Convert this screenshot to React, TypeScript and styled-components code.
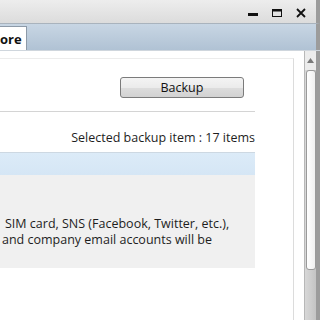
import styled, { createGlobalStyle } from 'styled-components'

const Global = createGlobalStyle`
  html, body {
    margin: 0;
    padding: 0;
    background: #fff;
  }
  body {
    font-family: "Open Sans", "Noto Sans", sans-serif;
    font-size: 12.5px;
    color: #1e1e1e;
  }
`

const Window = styled.div`
  width: 320px;
  height: 320px;
  display: flex;
  flex-direction: column;
  overflow: hidden;
`

const TitleBar = styled.div`
  height: 24px;
  flex-shrink: 0;
  display: flex;
  align-items: center;
  justify-content: flex-end;
  gap: 10px;
  padding: 2px 8px 0 0;
  box-sizing: border-box;
  background: linear-gradient(#ededed, #dcdcdc);
  border-bottom: 1px solid #a9b3bd;
  border-right: 4px solid #9c9c9c;
`

const WinButton = styled.button`
  width: 14px;
  height: 14px;
  padding: 0;
  border: 0;
  background: none;
  display: flex;
  align-items: center;
  justify-content: center;
`

const TabStrip = styled.div`
  height: 26px;
  flex-shrink: 0;
  display: flex;
  align-items: flex-end;
  overflow: hidden;
  background: linear-gradient(#c8d6e4, #b0c2d4);
  border-right: 4px solid #9c9c9c;
`

const Tab = styled.div`
  height: 23px;
  padding: 0 4px 0 0;
  display: flex;
  align-items: center;
  background: #fff;
  border: 1px solid #8d9aa8;
  border-left: 0;
  border-bottom: 0;
  font-weight: 700;
  font-size: 13px;
  color: #111;
  white-space: nowrap;
`

const Body = styled.div`
  flex: 1;
  display: flex;
  border-top: 1px solid #cfd6dd;
  min-height: 0;
`

const Main = styled.div`
  flex: 1;
  padding: 7px 10px 0 0;
  background: #fff;
  display: flex;
`

const Panel = styled.div`
  flex: 1;
  border-top: 1px solid #ececec;
  border-right: 1px solid #dcdcdc;
  padding-right: 38px;
`

const Section = styled.div`
  display: flex;
  flex-direction: column;
`

const ButtonRow = styled.div`
  height: 53px;
  display: flex;
  align-items: flex-start;
  justify-content: flex-end;
  padding: 18px 11px 0 0;
  box-sizing: border-box;
  border-bottom: 1px solid #d4d4d4;
`

const PushButton = styled.button`
  width: 124px;
  height: 21px;
  border: 1px solid #7b7b7b;
  border-radius: 3px;
  background: linear-gradient(#f4f4f4 0%, #ebebeb 50%, #dddddd 51%, #d2d2d2 100%);
  font-family: "Open Sans", "Noto Sans", sans-serif;
  font-size: 12.5px;
  color: #111;
  padding: 0;
  line-height: 18px;
`

const Summary = styled.div`
  height: 40px;
  display: flex;
  align-items: center;
  justify-content: flex-end;
  padding-top: 11px;
  box-sizing: border-box;
`

const ListHead = styled.div`
  height: 22px;
  background: linear-gradient(#dcebf8, #d5e6f5);
  border-top: 1px solid #cdd8e2;
`

const ListBody = styled.div`
  background: #f0f0f0;
  height: 93px;
  padding: 41px 0 0 2px;
  box-sizing: border-box;
  line-height: 16px;
`

const Line = styled.div<{ $indent?: number }>`
  padding-left: ${p => p.$indent ?? 0}px;
  white-space: nowrap;
`

const ScrollBar = styled.div`
  width: 11px;
  display: flex;
  flex-direction: column;
  align-items: center;
  background: linear-gradient(90deg, #d8d8d8, #c4c4c4);
  border-left: 1px solid #b8b8b8;
  border-right: 4px solid #9c9c9c;
`

const Arrow = styled.div`
  height: 19px;
  width: 100%;
  background: #ececec;
  display: flex;
  align-items: center;
  justify-content: center;
`

const Thumb = styled.div`
  width: 10px;
  height: 200px;
  box-sizing: border-box;
  background: linear-gradient(90deg, #ffffff, #f0f0f0);
  border: 1px solid #9a9a9a;
  border-radius: 3px;
`

export default function App() {
  return (
    <>
      <Global />
      <Window>
        <TitleBar>
          <WinButton>
            <svg width="12" height="12" viewBox="0 0 12 12">
              <rect x="1" y="6" width="10" height="3" fill="#111" />
            </svg>
          </WinButton>
          <WinButton>
            <svg width="12" height="12" viewBox="0 0 12 12">
              <rect x="1.5" y="2.5" width="9" height="7" fill="none" stroke="#111" strokeWidth="1" />
              <rect x="1" y="2" width="10" height="2.5" fill="#111" />
            </svg>
          </WinButton>
          <WinButton>
            <svg width="12" height="12" viewBox="0 0 12 12">
              <path d="M2 2L10 10M10 2L2 10" stroke="#111" strokeWidth="1.8" />
            </svg>
          </WinButton>
        </TitleBar>
        <TabStrip>
          <Tab>ore</Tab>
        </TabStrip>
        <Body>
          <Main>
            <Panel>
              <Section>
                <ButtonRow>
                  <PushButton>Backup</PushButton>
                </ButtonRow>
                <Summary>Selected backup item : 17 items</Summary>
                <ListHead />
                <ListBody>
                  <Line $indent={3}>SIM card, SNS (Facebook, Twitter, etc.),</Line>
                  <Line>and company email accounts will be</Line>
                </ListBody>
              </Section>
            </Panel>
          </Main>
          <ScrollBar>
            <Arrow>
              <svg width="7" height="5" viewBox="0 0 7 5">
                <path d="M0 5L3.5 0L7 5Z" fill="#7a7a7a" />
              </svg>
            </Arrow>
            <Thumb />
          </ScrollBar>
        </Body>
      </Window>
    </>
  )
}
